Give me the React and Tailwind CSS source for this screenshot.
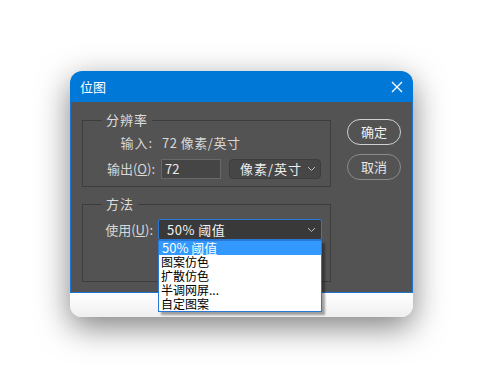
import React from "react";

const font = { fontFamily: '"Noto Sans CJK SC", "Liberation Sans", sans-serif' };

function Chevron() {
  return (
    <svg width="9" height="6" viewBox="0 0 9 6" className="shrink-0">
      <path d="M1 1 L4.5 4.5 L8 1" fill="none" stroke="#bdbdbd" strokeWidth="1" />
    </svg>
  );
}

function Group({ title, className, children }) {
  return (
    <div className={"relative border border-[#3d3d3d] " + className}>
      <div className="absolute -top-[10px] left-[19px] bg-[#535353] px-[4px] text-[13px] leading-[18px] tracking-[1px] text-[#dedede]">
        {title}
      </div>
      {children}
    </div>
  );
}

export default function App() {
  return (
    <div className="w-[484px] h-[387px] bg-white pt-[71px] pl-[70px]" style={font}>
      <div className="w-[343px] h-[246px] rounded-[12px] overflow-hidden shadow-[0_10px_32px_rgba(0,0,0,0.5)] bg-white flex flex-col">
        {/* title bar */}
        <div className="h-[31px] bg-[#0078d7] flex items-center justify-between pl-[10px] pr-[10px] shrink-0">
          <span className="text-white text-[13px] leading-none">位图</span>
          <svg width="12" height="12" viewBox="0 0 12 12">
            <path d="M1 1 L11 11 M11 1 L1 11" stroke="white" strokeWidth="1.3" />
          </svg>
        </div>
        {/* body */}
        <div className="h-[191px] shrink-0 bg-[#535353] border-x border-b border-[#1f74cf] flex pl-[11px] pt-[17px] relative z-10">
          <div className="w-[249px] flex flex-col">
            <Group title="分辨率" className="h-[67px] mt-[1px]">
              <div className="flex items-center mt-[14px] text-[13px] leading-[16px] text-[#d8d8d8]">
                <span className="w-[70px] text-right tracking-[1px]">输入:</span>
                <span className="ml-[9px] tracking-[0.5px] whitespace-nowrap">72 像素/英寸</span>
              </div>
              <div className="flex items-center mt-[8px] text-[13px] text-[#d8d8d8]">
                <span className="w-[72px] text-right whitespace-nowrap">输出(<span className="underline">O</span>):</span>
                <div className="ml-[6px] w-[60px] h-[20px] bg-[#454545] border border-[#686868] flex items-center pl-[3px] text-[#ececec]">
                  72
                </div>
                <div className="ml-[8px] w-[92px] h-[20px] bg-[#464646] border border-[#3d3d3d] rounded-[4px] flex items-center justify-between pl-[10px] pr-[4px] text-[#eeeeee]">
                  <span className="tracking-[1px] whitespace-nowrap">像素/英寸</span>
                  <Chevron />
                </div>
              </div>
            </Group>
            <Group title="方法" className="h-[78px] mt-[17px]">
              <div className="flex items-center mt-[14px] text-[13px] text-[#d8d8d8]">
                <span className="w-[70px] text-right whitespace-nowrap">使用(<span className="underline">U</span>):</span>
                <div className="relative ml-[5px] w-[164px] h-[21px]">
                  <div className="w-full h-full bg-[#393939] border border-[#2a78d6] rounded-[2px] flex items-center justify-between pl-[8px] pr-[5px] text-[#f2f2f2]">
                    <span className="tracking-[0.5px]">50% 阈值</span>
                    <Chevron />
                  </div>
                  <div className="absolute left-0 top-[21px] w-[164px] bg-white border border-[#2a78d6] shadow-[3px_3px_2px_rgba(0,0,0,0.35)] text-[12px] leading-[14px] text-black">
                    <div className="h-[14px] bg-[#3399ff] text-white pl-[3px] text-[13px] leading-[14px]">50% 阈值</div>
                    <div className="h-[14px] pl-[2px]">图案仿色</div>
                    <div className="h-[14px] pl-[2px]">扩散仿色</div>
                    <div className="h-[14px] pl-[2px]">半调网屏...</div>
                    <div className="h-[14px] pl-[2px]">自定图案</div>
                  </div>
                </div>
              </div>
            </Group>
          </div>
          <div className="ml-[16px] flex flex-col gap-[9px]">
            <button className="w-[54px] h-[26px] rounded-full border-[1.5px] border-[#d0d0d0] text-[13px] text-[#f0f0f0] flex items-center justify-center">
              确定
            </button>
            <button className="w-[54px] h-[26px] rounded-full border border-[#8c8c8c] text-[13px] text-[#e6e6e6] flex items-center justify-center">
              取消
            </button>
          </div>
        </div>
        <div className="flex-1 bg-gradient-to-b from-white to-[#efefef]" />
      </div>
    </div>
  );
}
